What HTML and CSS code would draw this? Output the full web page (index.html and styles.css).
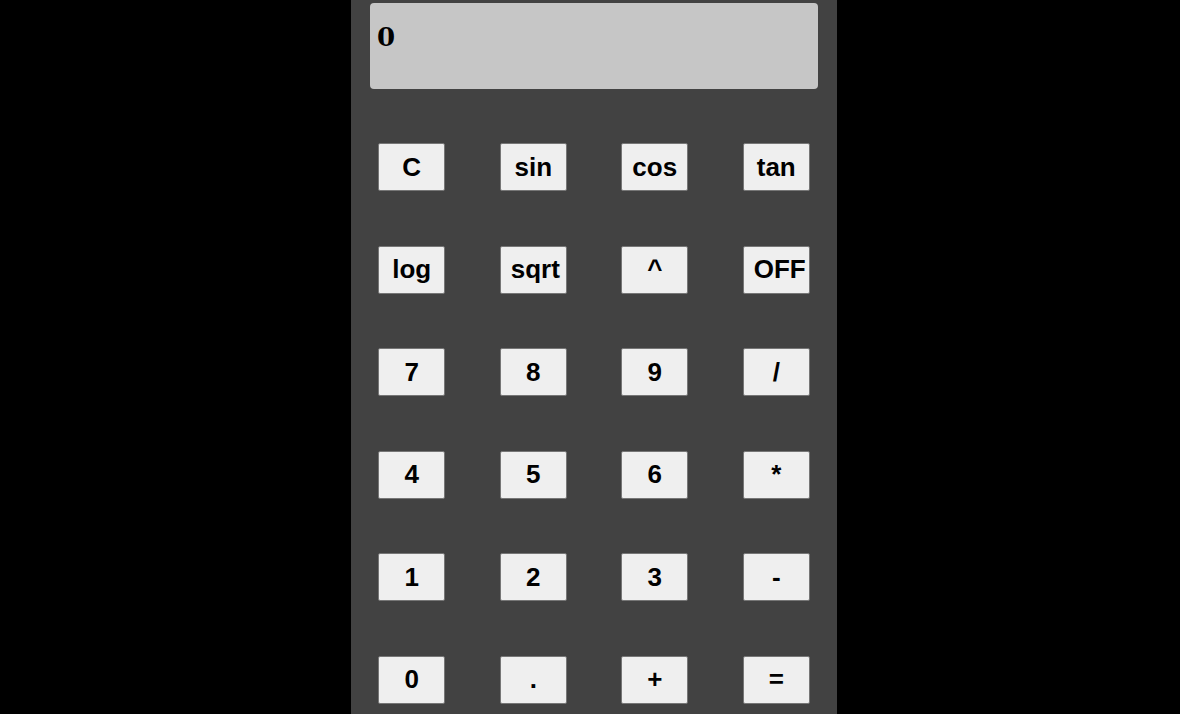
FILE: index.html
```html
<!DOCTYPE html>
<html lang="en">
<head>
    <meta charset="UTF-8">
    <meta name="viewport" content="width=device-width, initial-scale=1.0">
    <title>Calculator</title>
    <link rel="stylesheet" href="styles.css">
</head>
<body>

<div class="calculator">
    <div class="display" id="display">0</div>
    <div class="keys">
        <button>C</button>
        <button>sin</button>
        <button>cos</button>
        <button>tan</button>
        <button>log</button>
        <button>sqrt</button>
        <button>^</button>
        <button>OFF</button>
        <button>7</button>
        <button>8</button>
        <button>9</button>
        <button>/</button>
        <button>4</button>
        <button>5</button>
        <button>6</button>
        <button>*</button>
        <button>1</button>
        <button>2</button>
        <button>3</button>
        <button>-</button>
        <button>0</button>
        <button>.</button>
        <button>+</button>
        <button>=</button>
    </div>
</div>

</body>
</html>
```

FILE: styles.css
```css
body {
    margin: 0;
    padding-left: 8px;
    background-color: #000;
    display: flex;
    justify-content: center;
    font-family: "Liberation Sans", Arial, sans-serif;
}
.calculator {
    width: 486px;
    min-height: 100vh;
    background-color: #424242;
    padding-top: 3px;
    box-sizing: border-box;
}
.display {
    margin: 0 19px;
    height: 86px;
    box-sizing: border-box;
    padding: 19px 7px;
    background-color: #c6c6c6;
    border-radius: 4px;
    font-family: "DejaVu Serif", "Liberation Serif", serif;
    font-size: 26px;
    font-weight: bold;
    line-height: 30px;
    color: #000;
}
.keys {
    display: grid;
    grid-template-columns: repeat(4, 1fr);
    grid-auto-rows: 48px;
    row-gap: 54.6px;
    justify-items: center;
    margin-top: 54px;
}
.keys button {
    width: 67px;
    height: 48px;
    padding: 0 10px;
    background-color: #efefef;
    border: 1px solid #767676;
    border-radius: 2px;
    font-family: "Liberation Sans", Arial, sans-serif;
    font-size: 26px;
    font-weight: bold;
    color: #000;
    text-align: center;
    white-space: nowrap;
    cursor: pointer;
}
```
